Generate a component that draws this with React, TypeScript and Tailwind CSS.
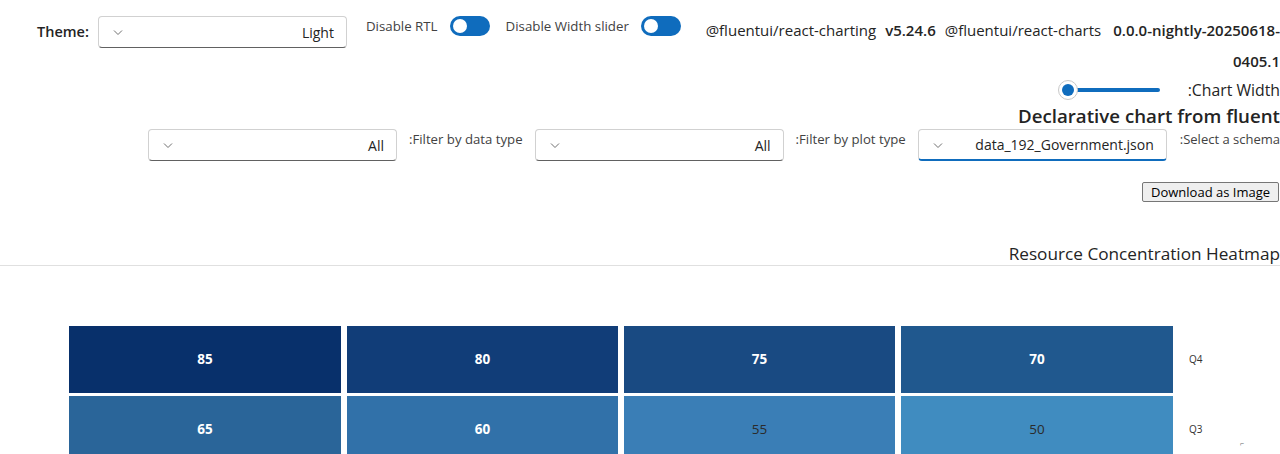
import React from "react";

const cells = [
  { v: 85, bg: "bg-[#08306b]", light: true },
  { v: 80, bg: "bg-[#113d78]", light: true },
  { v: 75, bg: "bg-[#194a82]", light: true },
  { v: 70, bg: "bg-[#20588e]", light: true },
  { v: 65, bg: "bg-[#2a6599]", light: true },
  { v: 60, bg: "bg-[#3171a9]", light: true },
  { v: 55, bg: "bg-[#3a7eb6]", light: false },
  { v: 50, bg: "bg-[#408cc0]", light: false },
];

const Chevron = () => (
  <svg width="12" height="12" viewBox="0 0 12 12" className="text-[#707070]">
    <path d="M2 4.5 L6 8.5 L10 4.5" fill="none" stroke="currentColor" strokeWidth="1" />
  </svg>
);

const Dropdown = ({ value, active }: { value: string; active?: boolean }) => (
  <div
    className={
      "flex h-[32px] w-[249px] items-center justify-between rounded-[4px] border border-[#d1d1d1] bg-white pl-[13px] pr-[12px] " +
      (active ? "border-b-2 border-b-[#0f6cbd]" : "border-b-[#616161]")
    }
  >
    <Chevron />
    <span className="text-[14px] text-[#242424]">{value}</span>
  </div>
);

const Toggle = () => (
  <div className="flex h-[20px] w-[40px] items-center rounded-full bg-[#0f6cbd] pl-[3px]">
    <div className="h-[14px] w-[14px] rounded-full bg-white" />
  </div>
);

export default function App() {
  return (
    <div className="h-[454px] w-[1280px] overflow-hidden bg-white text-[#242424] font-['Open_Sans',sans-serif]">
      {/* top controls */}
      <div className="flex items-start pl-[37px] pt-[16px]">
        <span className="mt-[5px] text-[14.5px] font-semibold">Theme:</span>
        <div className="ml-[9px]">
          <Dropdown value="Light" />
        </div>
        <span className="ml-[19px] mt-[1px] text-[13.3px] text-[#424242]">Disable RTL</span>
        <div className="ml-[12px]">
          <Toggle />
        </div>
        <span className="ml-[16px] mt-[1px] text-[13.3px] text-[#424242]">Disable Width slider</span>
        <div className="ml-[12px]">
          <Toggle />
        </div>
        <div className="flex-1 text-right text-[15px] leading-[31px]">
          <div className="mt-[-1px] whitespace-nowrap">
            <span>@fluentui/react-charting</span>
            <span className="ml-[9px] font-semibold">v5.24.6</span>
            <span className="ml-[9px]">@fluentui/react-charts</span>
            <span className="ml-[12px] font-semibold">0.0.0-nightly-20250618-</span>
          </div>
          <div className="font-semibold">0405.1</div>
        </div>
      </div>

      {/* width slider */}
      <div className="mt-[2px] flex h-[22px] items-center justify-end">
        <div className="relative flex w-[112px] items-center">
          <div className="ml-[10px] h-[4px] w-[92px] rounded-full bg-[#0f6cbd]" />
          <div className="absolute left-0 flex h-[20px] w-[20px] items-center justify-center rounded-full border border-[#c8c8c8] bg-white">
            <div className="h-[12px] w-[12px] rounded-full bg-[#0f6cbd]" />
          </div>
        </div>
        <span className="ml-[18px] mt-[2px] text-[15.8px]">:Chart Width</span>
      </div>

      <div className="mt-[4px] text-right text-[18.7px] font-semibold leading-[22px]">
        Declarative chart from fluent
      </div>

      {/* filters */}
      <div className="mt-[2px] flex items-start justify-end">
        <Dropdown value="All" />
        <span className="ml-[12px] mr-[12px] mt-[1px] text-[13.2px] text-[#424242]">:Filter by data type</span>
        <Dropdown value="All" />
        <span className="ml-[12px] mr-[12px] mt-[1px] text-[13.2px] text-[#424242]">:Filter by plot type</span>
        <Dropdown value="data_192_Government.json" active />
        <span className="ml-[13px] mt-[1px] text-[13px] text-[#424242]">:Select a schema</span>
      </div>

      <div className="mt-[21px] flex justify-end pr-[1px]">
        <button className="h-[20px] rounded-[2px] border border-[#767676] bg-[#efefef] px-[8px] text-[13px] leading-[18px] text-black">
          Download as Image
        </button>
      </div>

      {/* chart */}
      <div className="mt-[42px] border-b border-[#e0e0e0] pb-[1px] text-right text-[17.2px] leading-[20px]">
        Resource Concentration Heatmap
      </div>

      <div className="mt-[60px] flex items-start pl-[69px]">
        <div className="grid grid-cols-[272px_271px_271px_272px] gap-x-[6px] gap-y-[3px]">
          {cells.map((c) => (
            <div
              key={c.v}
              className={
                c.bg +
                " flex h-[67px] items-center justify-center text-[13.5px] " +
                (c.light ? "font-bold text-white" : "text-[#2b2b2b]")
              }
            >
              {c.v}
            </div>
          ))}
        </div>
        <div className="relative ml-[16px] flex flex-col text-[10px] text-[#323130]">
          <div className="flex h-[67px] items-center">Q4</div>
          <div className="mt-[3px] flex h-[67px] items-center">Q3</div>
          <span className="absolute left-[51px] top-[113px] text-[7px] text-[#666]">⌐</span>
        </div>
      </div>
    </div>
  );
}
